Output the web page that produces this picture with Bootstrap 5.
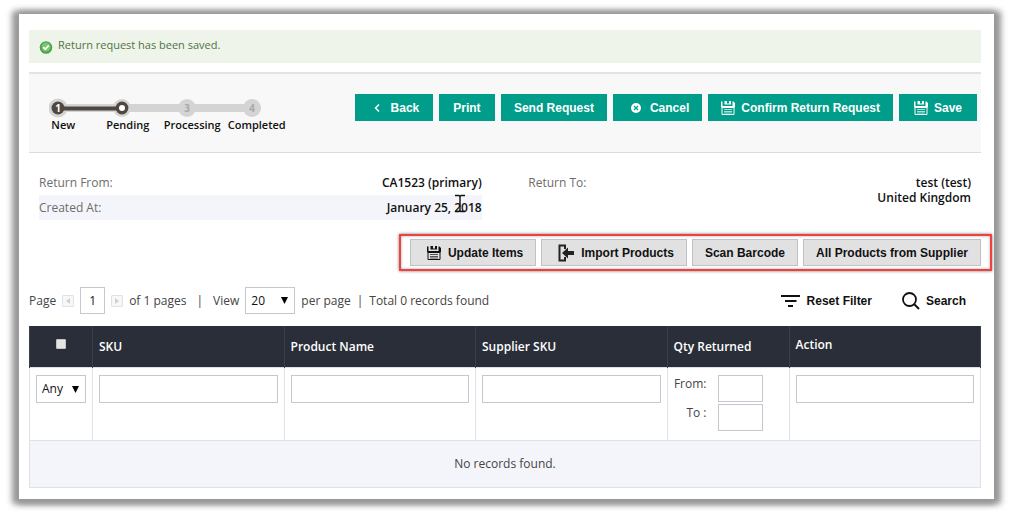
<!DOCTYPE html>
<html lang="en">
<head>
<meta charset="utf-8">
<meta name="viewport" content="width=device-width, initial-scale=1">
<title>Return Request</title>
<link href="https://cdn.jsdelivr.net/npm/bootstrap@5.3.0/dist/css/bootstrap.min.css" rel="stylesheet">
<style>
  body { background: #fff; font: 12px/18px "Open Sans", "Noto Sans", sans-serif; color: #444; }
  .sheet { margin: 14px 20px 15px 19px; padding: 16px 13px 11px 10px; background: #fff; box-shadow: -3px 1px 6px 4px #999, 3px 1px 6px 4px #999; }
  .saved-note { height: 33px; padding: 0 10px; margin-bottom: 9px; background: #eef4ea; color: #51733f; font-size: 11px; gap: 5px; }
  .saved-note span { padding-bottom: 3px; }
  .action-bar { height: 81px; padding: 0 4px 0 20px; background: #f8f8f8; border-top: 2px solid #e3e3e3; border-bottom: 1px solid #dcdcdc; }
  .steps { width: 260px; padding-top: 6px; }
  .steps svg { display: block; }
  .steps ol { width: 258px; color: #111; font-size: 11px; line-height: 14px; font-weight: 600; margin-left: -18px; }
  .btn { --bs-btn-border-radius: 0; --bs-btn-padding-y: 0; --bs-btn-padding-x: 12px; --bs-btn-line-height: 24px; --bs-btn-font-size: 12px; --bs-btn-font-weight: 700; --bs-btn-font-family: "Liberation Sans", Arial, sans-serif; display: inline-flex; align-items: center; justify-content: center; gap: 6px; height: 27px; white-space: nowrap; }
  .btn-teal { --bs-btn-color: #fff; --bs-btn-bg: #009d8a; --bs-btn-border-color: #009d8a; --bs-btn-hover-color: #fff; --bs-btn-hover-bg: #00806f; min-width: 56px; }
  .btn-plain { --bs-btn-color: #111; --bs-btn-bg: #e1e1e1; --bs-btn-border-color: #bfc2c4; --bs-btn-hover-bg: #d4d4d4; gap: 7px; }
  .btn-bare { --bs-btn-color: #111; --bs-btn-border-width: 0; --bs-btn-padding-x: 15px; }
  .btn-wide { min-width: 78px; }
  .header-buttons { gap: 6px; }
  .details { padding: 17px 10px 0; height: 81px; }
  .details dl { line-height: 25px; color: #6c6c6c; width: 47.5%; }
  .details dt { font-weight: 400; }
  .details dd { font-weight: 600; color: #111; }
  .shaded { background: #f4f5fb; }
  .details .address { line-height: 15px; padding-top: 5px; }
  .text-cursor { right: 16px; top: -1px; }
  .callout { border: 2px solid #f04040; padding: 3px 9px; margin-right: -11px; box-shadow: 0 0 3px #777, inset 0 0 3px #aaa; gap: 5px; }
  .pager { margin-top: 16px; margin-bottom: 12px; }
  .pager-left { gap: 6px; }
  .box { border: 1px solid #c6c8d0; border-radius: 0; background: #fff; color: #111; font-size: 12px; height: 28px; padding: 0 6px; width: 100%; display: block; }
  .box-page { width: 25px; text-align: center; padding: 0; }
  select.box { appearance: none; background: #fff url("data:image/svg+xml,%3Csvg xmlns='http://www.w3.org/2000/svg' width='7' height='7'%3E%3Cpath d='M0 0h7L3.500 7z'/%3E%3C/svg%3E") no-repeat right 6px center; padding: 0 5px; }
  .pager .box { height: 27px; }
  .box-view { width: 50px; }
  .step-btn { width: 12px; height: 12px; border: 1px solid #e2e2e2; border-radius: 1px; background: #f7f7f7; padding: 0; display: flex; align-items: center; justify-content: center; }
  .grid-table { table-layout: fixed; width: 100%; border-collapse: collapse; }
  .grid-table th { background: #2a2e38; color: #fff; font-weight: 600; height: 41px; padding: 0 6px; border: 1px solid #3b3f49; border-width: 0 1px; }
  .grid-table thead { border: 1px solid #2a2e38; }
  .grid-table tbody td { border: 1px solid #e0e1e6; padding: 7px 6px; vertical-align: top; height: 73px; }
  .grid-table tbody td.none-found { height: 47px; vertical-align: middle; text-align: center; background: #f4f5fb; padding: 0; }
  .col-check { width: 63px; }
  .col-qty { width: 122px; }
  .box-range { width: 45px; height: 27px; }
  .range-rows { gap: 2px; }
  .range-row { gap: 11px; }
  .range-label { width: 33px; text-align: right; }
  .head-check { appearance: none; width: 10px; height: 10px; border: 1px solid #c4c4c4; border-radius: 1px; background: #e4e4e4; margin: 0; }
</style>
</head>
<body>
<svg width="0" height="0" class="position-absolute" aria-hidden="true">
  <symbol id="disk" viewBox="0 0 14 14">
    <path fill="currentColor" d="M0 0.500h1.500v4.500H11.500V0.500h1L14 2v4.500H0zM3.500 0H6v3.500H3.500zM8 0h2v3.500H8zM6 2.500h2v1H6z"/>
    <path d="M1 6.500h12v7H1z" fill="none" stroke="currentColor"/>
    <path d="M3 8.500h8M3 10.500h8M3 12h8" stroke="currentColor" stroke-width=".9" opacity=".75"/>
  </symbol>
</svg>
<main class="sheet">
  <div class="saved-note d-flex align-items-center" role="status">
    <svg width="14" height="14" viewBox="0 0 14 14" aria-hidden="true"><circle cx="7" cy="7.500" r="6.300" fill="#4ba34a"/><circle cx="7" cy="7" r="4.500" fill="#79c66e"/><path d="M4.300 7.200l2 2 3.500-3.700" fill="none" stroke="#fff" stroke-width="1.800"/></svg>
    <span>Return request has been saved.</span>
  </div>

  <header class="action-bar d-flex justify-content-between">
    <div class="steps pt-4">
      <svg width="216" height="20" viewBox="0 0 216 20" aria-hidden="true">
        <path d="M9 10h194" stroke="#d4d4d4" stroke-width="8"/>
        <g fill="#d4d4d4"><circle cx="9" cy="10" r="9.500"/><circle cx="73" cy="10" r="9"/><circle cx="138" cy="10" r="9"/><circle cx="203" cy="10" r="9"/></g>
        <path d="M9 10.500h64" stroke="#504741" stroke-width="4"/>
        <circle cx="9" cy="10" r="6.500" fill="#504741"/><circle cx="73" cy="10" r="4.700" fill="#fff" stroke="#504741" stroke-width="3.400"/>
        <g font-size="10" font-weight="700" text-anchor="middle"><text x="9" y="14" fill="#fff">1</text><text x="138" y="14" fill="#a8a8a8">3</text><text x="203" y="14" fill="#a8a8a8">4</text></g>
      </svg>
      <ol class="list-unstyled d-flex text-center mb-0"><li class="col-3">New</li><li class="col-3">Pending</li><li class="col-3">Processing</li><li class="col-3">Completed</li></ol>
    </div>
    <div class="d-flex align-items-start pt-3">
      <div class="d-flex pt-1 header-buttons">
        <button class="btn btn-teal btn-wide" type="button"><svg width="16" height="10" viewBox="0 0 16 10" aria-hidden="true"><path d="M10 1.500L6.500 5 10 8.500" fill="none" stroke="#fff" stroke-width="1.500"/></svg>Back</button>
        <button class="btn btn-teal" type="button">Print</button>
        <button class="btn btn-teal" type="button">Send Request</button>
        <button class="btn btn-teal" type="button"><svg width="18" height="12" viewBox="0 0 18 12" aria-hidden="true"><circle cx="10" cy="6" r="5" fill="#fff"/><path d="M8 4l4 4M12 4L8 8" stroke="#009d8a" stroke-width="1.200"/></svg>Cancel</button>
        <button class="btn btn-teal" type="button"><svg width="14" height="14" aria-hidden="true"><use href="#disk"/></svg>Confirm Return Request</button>
        <button class="btn btn-teal btn-wide" type="button"><svg width="14" height="14" aria-hidden="true"><use href="#disk"/></svg>Save</button>
      </div>
    </div>
  </header>

  <section class="details d-flex justify-content-between">
    <dl class="mb-0">
      <div class="d-flex justify-content-between"><dt>Return From:</dt><dd class="mb-0">CA1523 (primary)</dd></div>
      <div class="d-flex justify-content-between shaded position-relative"><dt>Created At:</dt><dd class="mb-0">January 25, 2018</dd>
        <svg class="text-cursor position-absolute" width="12" height="20" viewBox="0 0 12 20" aria-hidden="true"><path d="M1 1.500h4l1 1 1-1h4M6 2v15M1 17.500h4l1-1 1 1h4" fill="none" stroke="#111" stroke-width="1.400"/></svg></div>
    </dl>
    <dl class="mb-0">
      <div class="d-flex justify-content-between"><dt>Return To:</dt><dd class="mb-0 text-end address">test (test)<br>United Kingdom</dd></div>
    </dl>
  </section>

  <div class="d-flex justify-content-end">
    <div class="callout d-flex">
      <button class="btn btn-plain" type="button"><svg class="ms-1" width="14" height="14" aria-hidden="true"><use href="#disk"/></svg>Update Items</button>
      <button class="btn btn-plain" type="button"><svg class="ms-1" width="16" height="18" viewBox="0 0 16 18" aria-hidden="true"><path d="M7 5V1.500H1.500v15H7V13" fill="none" stroke="#222" stroke-width="2"/><path d="M4 9l6-5.500V7h6v4h-6v3.500z" fill="#222"/></svg>Import Products</button>
      <button class="btn btn-plain" type="button">Scan Barcode</button>
      <button class="btn btn-plain" type="button">All Products from Supplier</button>
    </div>
  </div>

  <div class="pager d-flex align-items-center justify-content-between">
    <div class="pager-left d-flex align-items-center">
      <label for="page">Page</label>
      <button class="step-btn" type="button" aria-label="Previous page"><svg width="4" height="6"><path d="M4 0v6L0 3z" fill="#d0d0d0"/></svg></button>
      <input id="page" class="box box-page" value="1">
      <button class="step-btn" type="button" aria-label="Next page"><svg width="4" height="6"><path d="M0 0v6l4-3z" fill="#d0d0d0"/></svg></button>
      <span>of 1 pages</span><span class="mx-1">|</span>
      <label for="view">View</label>
      <select id="view" class="box box-view"><option>20</option></select>
      <span>per page</span><span>|</span><span>Total 0 records found</span>
    </div>
    <div class="d-flex">
      <button class="btn btn-bare" type="button"><svg width="20" height="14" viewBox="0 0 20 14" aria-hidden="true"><path d="M0 2h19M4 7h11.500M7 12h5" stroke="#111" stroke-width="2"/></svg>Reset Filter</button>
      <button class="btn btn-bare" type="button"><svg width="18" height="18" viewBox="0 0 18 18" aria-hidden="true"><circle cx="7.500" cy="7.500" r="6.500" fill="none" stroke="#111" stroke-width="1.800"/><path d="M12 12l5 5" stroke="#111" stroke-width="2"/></svg>Search</button>
    </div>
  </div>

  <table class="grid-table">
    <colgroup><col class="col-check"><col><col><col><col class="col-qty"><col></colgroup>
    <thead><tr>
      <th class="text-center pb-1"><input class="head-check" type="checkbox" aria-label="Select all"></th>
      <th>SKU</th><th>Product Name</th><th>Supplier SKU</th><th>Qty Returned</th><th class="pb-1">Action</th>
    </tr></thead>
    <tbody>
      <tr>
        <td><select class="box" aria-label="Selection"><option>Any</option></select></td>
        <td><input class="box" aria-label="SKU"></td>
        <td><input class="box" aria-label="Product name"></td>
        <td><input class="box" aria-label="Supplier SKU"></td>
        <td>
          <div class="range-rows d-flex flex-column">
            <div class="range-row d-flex"><label class="range-label" for="from">From:</label><input id="from" class="box box-range"></div>
            <div class="range-row d-flex"><label class="range-label" for="to">To :</label><input id="to" class="box box-range"></div>
          </div>
        </td>
        <td><input class="box" aria-label="Action"></td>
      </tr>
      <tr><td class="none-found" colspan="6">No records found.</td></tr>
    </tbody>
  </table>
</main>
<script src="https://cdn.jsdelivr.net/npm/bootstrap@5.3.0/dist/js/bootstrap.bundle.min.js"></script>
</body>
</html>
